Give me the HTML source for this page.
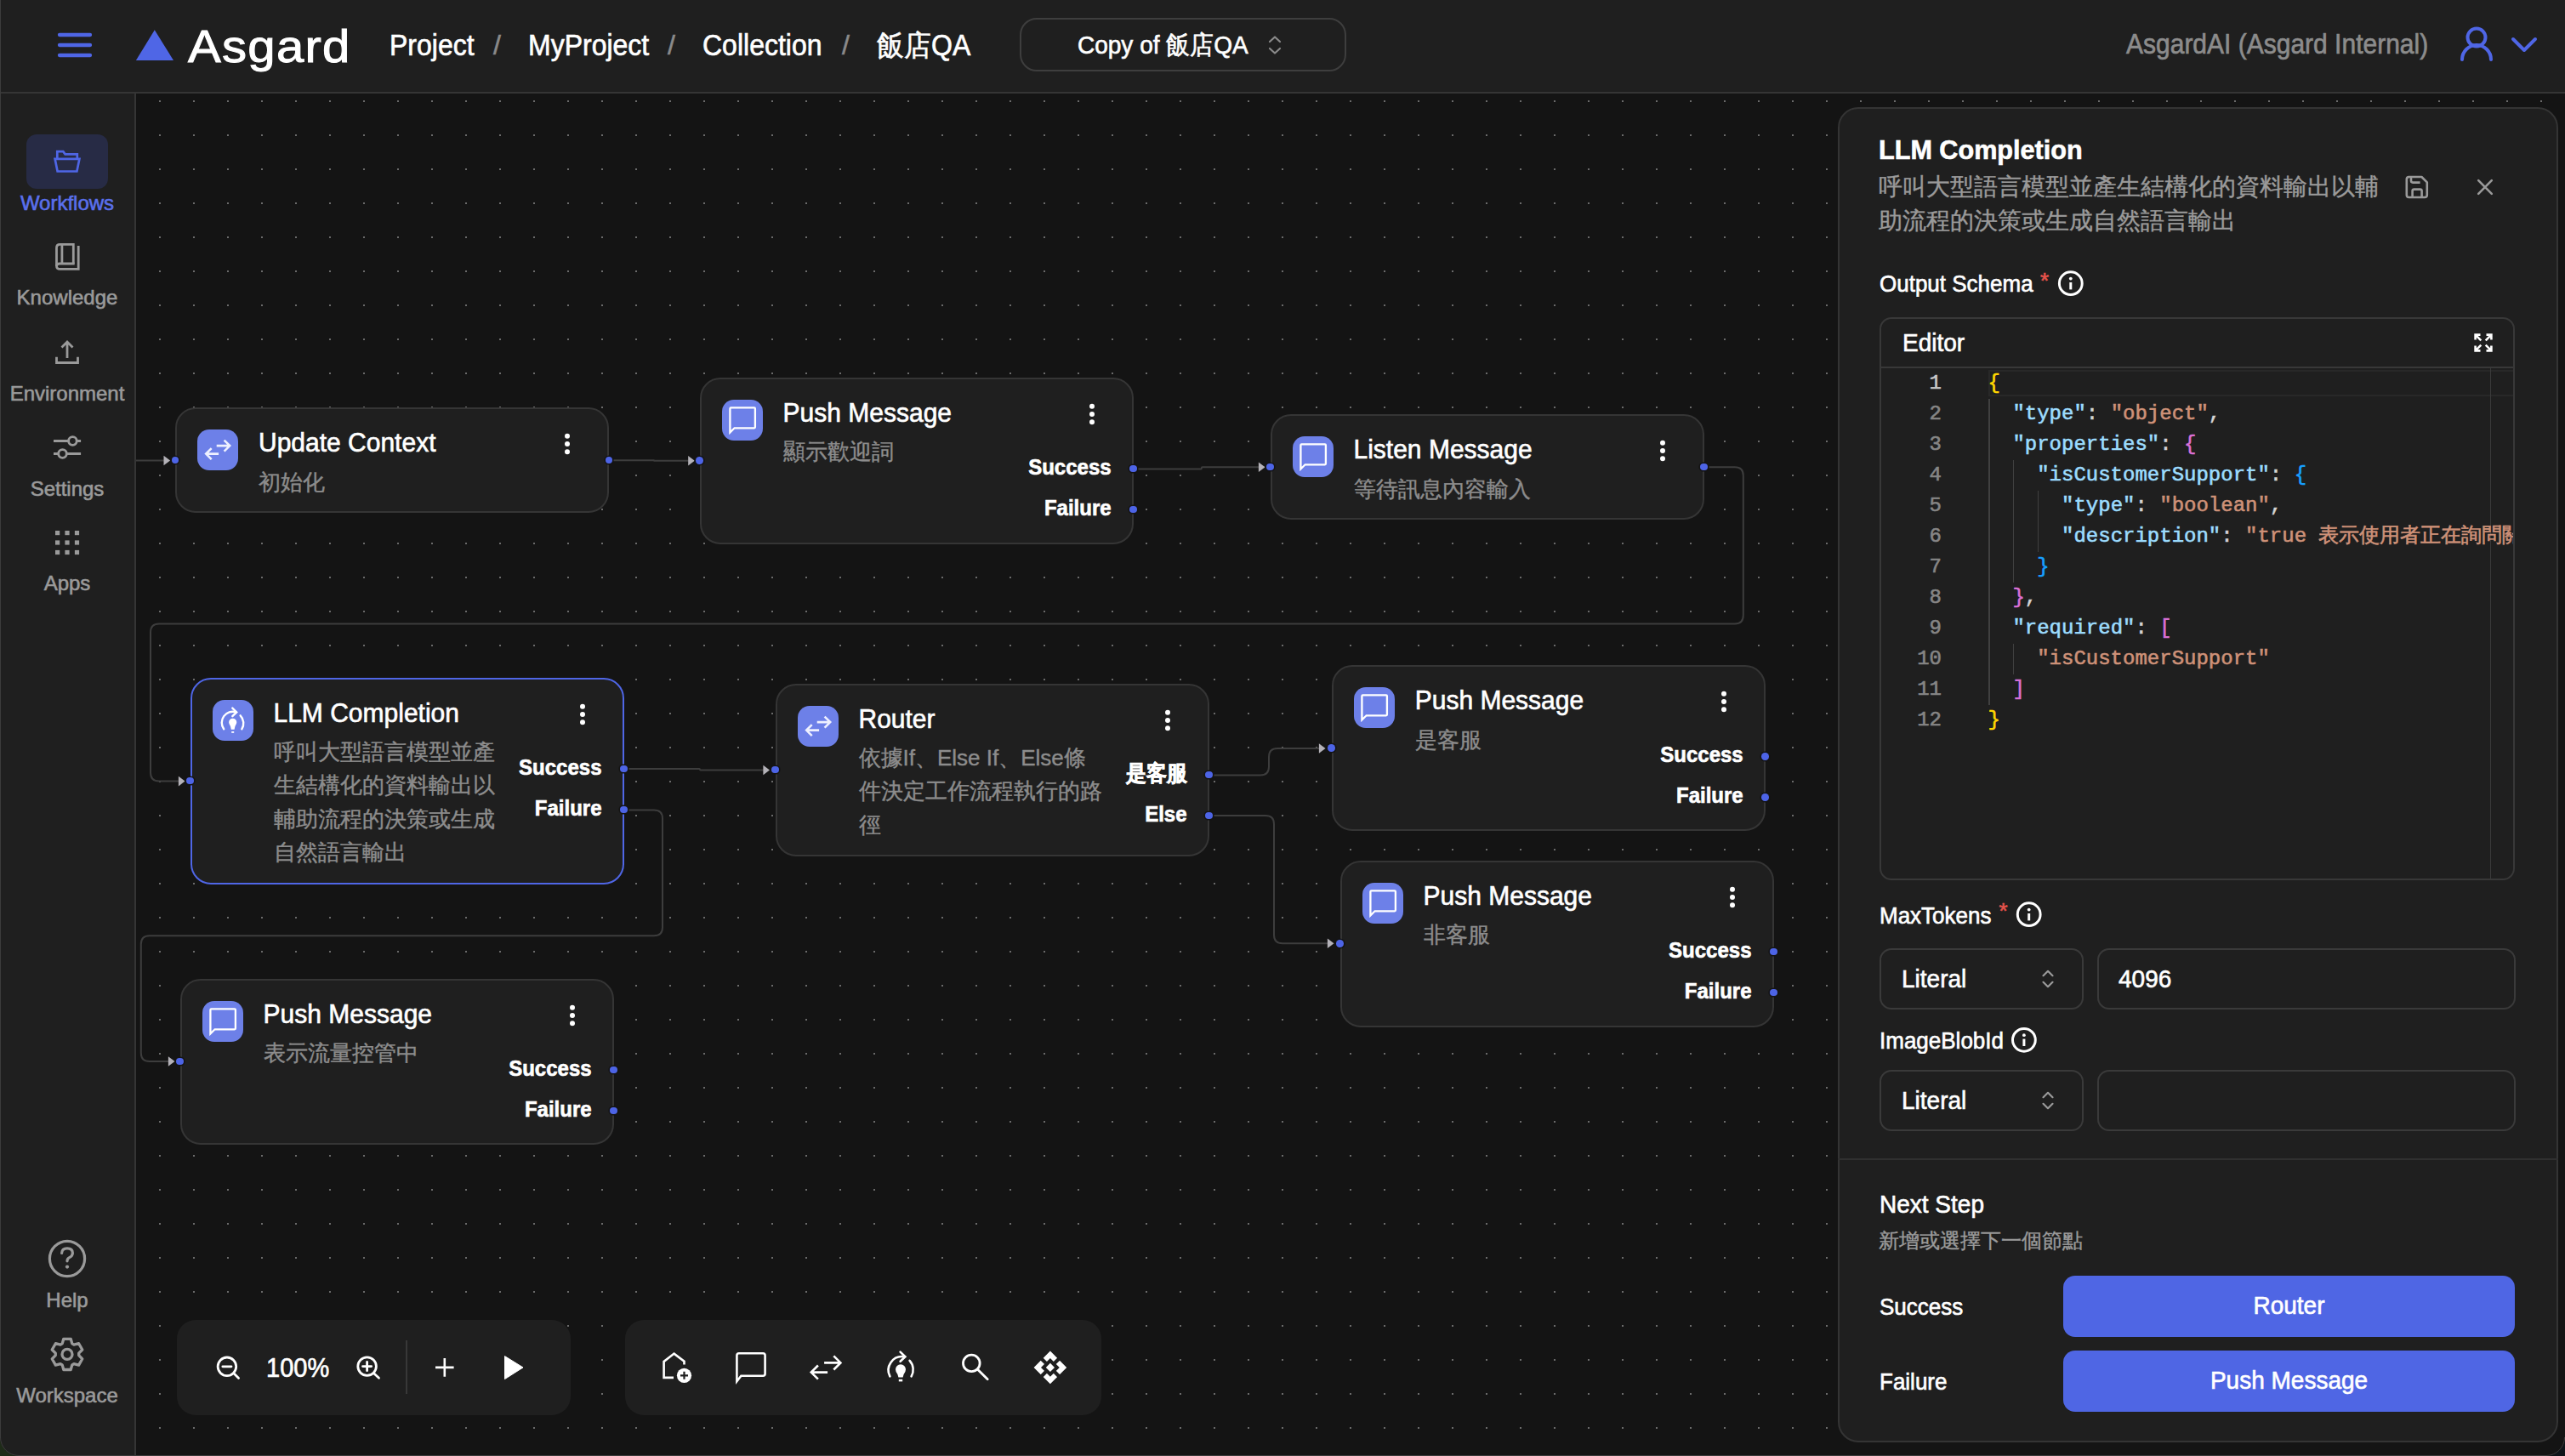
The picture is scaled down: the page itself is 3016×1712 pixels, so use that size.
<!DOCTYPE html>
<html><head><meta charset="utf-8">
<style>
*{box-sizing:border-box;margin:0;padding:0}
html,body{width:3016px;height:1712px;overflow:hidden;background:#141414}
body{font-family:"Liberation Sans",sans-serif;color:#fff;position:relative;-webkit-text-stroke-width:0.6px}
.a{position:absolute;white-space:nowrap}
#hdr{position:absolute;left:0;top:0;width:3016px;height:110px;background:#1f1f1f;border-bottom:2px solid #353535}
#side{position:absolute;left:0;top:110px;width:160px;height:1602px;background:#1f1f1f;border-right:2px solid #353535}
#canvas{position:absolute;left:160px;top:110px;width:2856px;height:1602px;background:#141414}
.node{position:absolute;background:#1f1f1f;border:2px solid #353535;border-radius:24px}
.node.sel{border-color:#4f66e6}
.ic{position:absolute;left:24px;top:24px;width:48px;height:48px;border-radius:14px;background:#6d80e8}
.ttl{position:absolute;left:96px;font-size:30px;line-height:30px;top:23px;color:#fff;white-space:nowrap;transform:scaleY(1.065);transform-origin:0 0}
.sub{position:absolute;left:96px;font-size:26px;line-height:39.4px;top:66.5px;-webkit-text-stroke-width:0.4px;color:#8c8c8c;white-space:nowrap}
.keb{position:absolute;top:28px;width:8px;height:26px}
.lab{position:absolute;right:24px;font-size:24px;line-height:24px;font-weight:700;color:#fff;white-space:nowrap;text-align:right;transform:scaleY(1.09) translateY(-0.6px);transform-origin:0 20px}
.hl{position:absolute;width:8.6px;height:8.6px;border-radius:50%;background:#4d64e6;box-shadow:0 0 0 1.6px #141414}
.tb{position:absolute;background:#1f1f1f;border-radius:22px}
</style></head>
<body>
<!-- HEADER -->
<div id="hdr">
  <svg class="a" style="left:64px;top:36px" width="48" height="34" viewBox="0 0 48 34">
    <g stroke="#4f66e6" stroke-width="4.3" stroke-linecap="round"><line x1="6" y1="5" x2="42" y2="5"/><line x1="6" y1="17" x2="42" y2="17"/><line x1="6" y1="29" x2="42" y2="29"/></g>
  </svg>
  <svg class="a" style="left:158px;top:34px" width="48" height="40" viewBox="0 0 48 40"><polygon points="23.8,1.2 46,37.1 1.9,37.1" fill="#4f66e6"/></svg>
  <div class="a" style="left:221px;top:27px;font-size:54px;line-height:54px;letter-spacing:1.2px;-webkit-text-stroke-width:1px;transform:scaleX(1.075);transform-origin:0 0">Asgard</div>
  <div class="a" id="bc" style="left:458px;top:36px;font-size:32px;line-height:32px;color:#fff;transform:scaleY(1.07);transform-origin:0 0">Project</div>
  <div class="a" style="left:580px;top:37px;font-size:32px;line-height:32px;color:#8a8a8a">/</div>
  <div class="a" style="left:621px;top:36px;font-size:32px;line-height:32px;transform:scaleY(1.07);transform-origin:0 0">MyProject</div>
  <div class="a" style="left:785px;top:37px;font-size:32px;line-height:32px;color:#8a8a8a">/</div>
  <div class="a" style="left:826px;top:36px;font-size:32px;line-height:32px;transform:scaleY(1.07);transform-origin:0 0">Collection</div>
  <div class="a" style="left:990px;top:37px;font-size:32px;line-height:32px;color:#8a8a8a">/</div>
  <div class="a" style="left:1031px;top:36px;font-size:32px;line-height:32px;transform:scaleY(1.07);transform-origin:0 0">飯店QA</div>
  <div class="a" style="left:1199px;top:21px;width:384px;height:63px;border:2px solid #3e3e3e;border-radius:20px"></div>
  <div class="a" style="left:1267px;top:38.5px;font-size:28px;line-height:28px;transform:scaleY(1.08);transform-origin:0 50%">Copy of 飯店QA</div>
  <svg class="a" style="left:1489px;top:40px" width="20" height="26" viewBox="0 0 20 26"><g fill="none" stroke="#8a8a8a" stroke-width="2.2" stroke-linecap="round" stroke-linejoin="round"><polyline points="4,9 10,3.5 16,9"/><polyline points="4,17 10,22.5 16,17"/></g></svg>
  <div class="a" style="left:2500px;top:37px;font-size:30px;line-height:30px;color:#8c8c8c;transform:scaleY(1.08);transform-origin:0 50%">AsgardAI (Asgard Internal)</div>
  <svg class="a" style="left:2890px;top:30px" width="44" height="46" viewBox="0 0 44 46"><g fill="none" stroke="#4f66e6" stroke-width="4" stroke-linecap="round"><circle cx="22" cy="14" r="10.5"/><path d="M5 40 A17 17 0 0 1 39 40"/></g></svg>
  <svg class="a" style="left:2950px;top:40px" width="36" height="26" viewBox="0 0 36 26"><polyline points="5,6 18,19 31,6" fill="none" stroke="#4f66e6" stroke-width="4" stroke-linecap="round" stroke-linejoin="round"/></svg>
</div>

<!-- SIDEBAR -->
<div id="side">
  <div class="a" style="left:31px;top:48px;width:96px;height:64px;border-radius:12px;background:#272b45"></div>
  <svg class="a" style="left:0;top:0" width="158" height="1602" viewBox="0 110 158 1602">
    <g fill="none" stroke="#4f66e6" stroke-width="2.7" stroke-linejoin="miter">
      <path d="M67.3 186.8 V178.1 H74.3 L76.6 181.3 H90.8 V186.8"/>
      <path d="M64.6 186.8 H93.4 L90.4 201.5 H67.6 Z"/>
    </g>
    <g fill="none" stroke="#9a9a9a" stroke-width="2.8">
      <path d="M86.3 310 V287.4 H70.5 Q66.5 287.4 66.5 291.4 V312.4 Q66.5 316.4 70.5 316.4 H92.2 V289"/>
      <path d="M66.5 313 Q66.5 310 70 310 H87.7"/>
      <path d="M72.9 287.4 V310"/>
      <path d="M79 421 V402.5 M72.5 408.6 L79 402.1 L85.5 408.6"/>
      <path d="M66.5 419.8 V426.5 H91.5 V419.8"/>
      <path d="M63 518.5 H80.6 M90.2 518.5 H95.1 M63 533.5 H68.7 M78.3 533.5 H95.1"/>
      <circle cx="85.4" cy="518.5" r="4.8"/>
      <circle cx="73.5" cy="533.5" r="4.8"/>
    </g>
    <g fill="#9a9a9a">
      <rect x="65" y="624" width="5.2" height="5.2"/><rect x="76.4" y="624" width="5.2" height="5.2"/><rect x="87.9" y="624" width="5.2" height="5.2"/>
      <rect x="65" y="635.4" width="5.2" height="5.2"/><rect x="76.4" y="635.4" width="5.2" height="5.2"/><rect x="87.9" y="635.4" width="5.2" height="5.2"/>
      <rect x="65" y="646.9" width="5.2" height="5.2"/><rect x="76.4" y="646.9" width="5.2" height="5.2"/><rect x="87.9" y="646.9" width="5.2" height="5.2"/>
    </g>
    <g fill="none" stroke="#9a9a9a" stroke-width="3.2" stroke-linecap="round">
      <circle cx="79" cy="1480" r="20.6"/>
      <path d="M72.6 1473.5 Q72.8 1467.8 79 1467.8 Q85.4 1467.8 85.4 1473.2 Q85.4 1476.8 81.6 1478.6 Q79 1479.8 79 1482.8"/>
    </g>
    <circle cx="79" cy="1489.6" r="2.1" fill="#9a9a9a"/>
    <g fill="none" stroke="#9a9a9a" stroke-width="3.3" stroke-linejoin="round">
      <path d="M73.2 1579.9 L74.8 1574.3 L83.2 1574.3 L84.8 1579.9 L86.9 1581.1 L92.6 1579.7 L96.8 1587.0 L92.7 1591.2 L92.7 1593.6 L96.8 1597.8 L92.6 1605.1 L86.9 1603.7 L84.8 1604.9 L83.2 1610.5 L74.8 1610.5 L73.2 1604.9 L71.1 1603.7 L65.4 1605.1 L61.2 1597.8 L65.3 1593.6 L65.3 1591.2 L61.2 1587.0 L65.4 1579.7 L71.1 1581.1 Z"/>
      <circle cx="79" cy="1592.4" r="6"/>
    </g>
  </svg>
  <div class="a" style="left:0;width:158px;text-align:center;top:117px;font-size:24px;line-height:24px;color:#5a70ec">Workflows</div>
  <div class="a" style="left:0;width:158px;text-align:center;top:228px;font-size:24px;line-height:24px;color:#9a9a9a">Knowledge</div>
  <div class="a" style="left:0;width:158px;text-align:center;top:340.5px;font-size:24px;line-height:24px;color:#9a9a9a">Environment</div>
  <div class="a" style="left:0;width:158px;text-align:center;top:452.5px;font-size:24px;line-height:24px;color:#9a9a9a">Settings</div>
  <div class="a" style="left:0;width:158px;text-align:center;top:563.5px;font-size:24px;line-height:24px;color:#9a9a9a">Apps</div>
  <div class="a" style="left:0;width:158px;text-align:center;top:1406.5px;font-size:24px;line-height:24px;color:#9a9a9a">Help</div>
  <div class="a" style="left:0;width:158px;text-align:center;top:1518.5px;font-size:24px;line-height:24px;color:#9a9a9a">Workspace</div>
</div>

<!-- CANVAS -->
<div id="canvas">
  <svg width="2856" height="1602" style="position:absolute;left:0;top:0">
    <defs><pattern id="dots" x="27" y="8" width="40" height="40" patternUnits="userSpaceOnUse"><rect x="0" y="0" width="2" height="2" fill="#6a6a6a"/></pattern></defs>
    <rect width="2856" height="1602" fill="url(#dots)"/>
  </svg>
</div>

<!--NODES-->
<svg class="a" style="left:0;top:0" width="3016" height="1712" viewBox="0 0 3016 1712"><g fill="none" stroke="#3d3d3d" stroke-width="2"><path d="M160 541.5 L193 541.5"/><path d="M716 541.3 L768.8 541.3 Q769 541.3 769.0 541.5 L769.0 541.5 Q769 541.8 769.2 541.8 L810 541.8"/><path d="M1332.6 551.6 L1411.6 551.6 Q1412.8 551.6 1412.8 550.4 L1412.8 550.4 Q1412.8 549.2 1414.0 549.2 L1487 549.2"/><path d="M2003.5 549.2 L2039.8 549.2 Q2049.8 549.2 2049.8 559.2 L2049.8 723.6 Q2049.8 733.6 2039.8 733.6 L187.0 733.6 Q177 733.6 177.0 743.6 L177.0 908.6 Q177 918.6 187.0 918.6 L211 918.6"/><path d="M733.5 904 L822.2 904.0 Q823 904 823.0 904.8 L823.0 904.8 Q823 905.5 823.8 905.5 L899 905.5"/><path d="M733.5 952.5 L769.0 952.5 Q779 952.5 779.0 962.5 L779.0 1090.3 Q779 1100.3 769.0 1100.3 L175.8 1100.3 Q165.8 1100.3 165.8 1110.3 L165.8 1238.0 Q165.8 1248 175.8 1248.0 L199 1248"/><path d="M1421.5 911.5 L1482.0 911.5 Q1492 911.5 1492.0 901.5 L1492.0 890.0 Q1492 880 1502.0 880.0 L1553 880"/><path d="M1421.5 959 L1488.0 959.0 Q1498 959 1498.0 969.0 L1498.0 1099.3 Q1498 1109.3 1508.0 1109.3 L1563 1109.3"/></g><g fill="#b4b2b8" stroke="none"><polygon points="192.5,535.7 200.1,541.5 192.5,547.3"/><polygon points="809.2,536.0 816.8,541.8 809.2,547.6"/><polygon points="1479.9,543.4 1487.5,549.2 1479.9,555.0"/><polygon points="209.9,912.8 217.5,918.6 209.9,924.4"/><polygon points="897.4,899.7 905.0,905.5 897.4,911.3"/><polygon points="197.9,1242.2 205.5,1248.0 197.9,1253.8"/><polygon points="1550.9,874.2 1558.5,880.0 1550.9,885.8"/><polygon points="1560.9,1103.5 1568.5,1109.3 1560.9,1115.1"/></g></svg>
<div class="node" style="left:206px;top:479px;width:510px;height:124px"><div class="ic"><svg width="48" height="48" viewBox="0 0 48 48"><g fill="none" stroke="#eef0ff" stroke-width="2.6" stroke-linecap="butt" stroke-linejoin="miter"><path d="M22.7 19.1 H38.2 M31.6 12.6 L38.2 19.1 L31.6 25.6"/><path d="M25.1 28.6 H10.2 M16.7 22.1 L10.2 28.6 L16.7 35.1"/></g></svg></div><div class="ttl">Update Context</div><div class="sub">初始化</div><svg class="keb" style="left:455px" width="8" height="26" viewBox="0 0 8 26"><circle cx="4" cy="3.8" r="3" fill="#fff"/><circle cx="4" cy="13" r="3" fill="#fff"/><circle cx="4" cy="22.2" r="3" fill="#fff"/></svg></div>
<div class="node" style="left:822.6px;top:443.5px;width:510px;height:196px"><div class="ic"><svg width="48" height="48" viewBox="0 0 48 48"><path d="M9.4 38.5 V10.4 Q9.4 9.4 10.4 9.4 H37.9 Q38.9 9.4 38.9 10.4 V32.3 Q38.9 33.3 37.9 33.3 H14.6 Z" fill="none" stroke="#fff" stroke-width="2.3" stroke-linejoin="miter"/></svg></div><div class="ttl">Push Message</div><div class="sub">顯示歡迎詞</div><svg class="keb" style="left:455px" width="8" height="26" viewBox="0 0 8 26"><circle cx="4" cy="3.8" r="3" fill="#fff"/><circle cx="4" cy="13" r="3" fill="#fff"/><circle cx="4" cy="22.2" r="3" fill="#fff"/></svg><div class="lab" style="top:93px">Success</div><div class="lab" style="top:141px">Failure</div></div>
<div class="node" style="left:1493.5px;top:487px;width:510px;height:124px"><div class="ic"><svg width="48" height="48" viewBox="0 0 48 48"><path d="M9.4 38.5 V10.4 Q9.4 9.4 10.4 9.4 H37.9 Q38.9 9.4 38.9 10.4 V32.3 Q38.9 33.3 37.9 33.3 H14.6 Z" fill="none" stroke="#fff" stroke-width="2.3" stroke-linejoin="miter"/></svg></div><div class="ttl">Listen Message</div><div class="sub">等待訊息內容輸入</div><svg class="keb" style="left:455px" width="8" height="26" viewBox="0 0 8 26"><circle cx="4" cy="3.8" r="3" fill="#fff"/><circle cx="4" cy="13" r="3" fill="#fff"/><circle cx="4" cy="22.2" r="3" fill="#fff"/></svg></div>
<div class="node sel" style="left:223.5px;top:796.5px;width:510px;height:243px"><div class="ic"><svg width="48" height="48" viewBox="0 0 48 48"><g fill="none" stroke="#fff" stroke-width="2.4" stroke-linecap="round"><path d="M13.2 34.3 A13 13 0 0 1 27.6 14.3"/><path d="M23.3 9.6 L28.2 14.4 L23.3 19.2"/><path d="M32.6 18.3 A13 13 0 0 1 34.3 34.3"/></g><path d="M23.7 21.7 A4.6 4.6 0 0 1 28.3 26.3 Q28.3 28.4 26.4 31 L25.6 34.8 H21.8 L21 31 Q19.1 28.4 19.1 26.3 A4.6 4.6 0 0 1 23.7 21.7 Z" fill="#fff"/><rect x="22.2" y="37" width="3" height="1.8" fill="#fff"/></svg></div><div class="ttl">LLM Completion</div><div class="sub">呼叫大型語言模型並產<br>生結構化的資料輸出以<br>輔助流程的決策或生成<br>自然語言輸出</div><svg class="keb" style="left:455px" width="8" height="26" viewBox="0 0 8 26"><circle cx="4" cy="3.8" r="3" fill="#fff"/><circle cx="4" cy="13" r="3" fill="#fff"/><circle cx="4" cy="22.2" r="3" fill="#fff"/></svg><div class="lab" style="top:93px">Success</div><div class="lab" style="top:141px">Failure</div></div>
<div class="node" style="left:911.5px;top:803.5px;width:510px;height:203px"><div class="ic"><svg width="48" height="48" viewBox="0 0 48 48"><g fill="none" stroke="#eef0ff" stroke-width="2.6" stroke-linecap="butt" stroke-linejoin="miter"><path d="M22.7 19.1 H38.2 M31.6 12.6 L38.2 19.1 L31.6 25.6"/><path d="M25.1 28.6 H10.2 M16.7 22.1 L10.2 28.6 L16.7 35.1"/></g></svg></div><div class="ttl">Router</div><div class="sub">依據If、Else If、Else條<br>件決定工作流程執行的路<br>徑</div><svg class="keb" style="left:455px" width="8" height="26" viewBox="0 0 8 26"><circle cx="4" cy="3.8" r="3" fill="#fff"/><circle cx="4" cy="13" r="3" fill="#fff"/><circle cx="4" cy="22.2" r="3" fill="#fff"/></svg><div class="lab" style="top:93px">是客服</div><div class="lab" style="top:141px">Else</div></div>
<div class="node" style="left:1565.7px;top:782px;width:510px;height:195px"><div class="ic"><svg width="48" height="48" viewBox="0 0 48 48"><path d="M9.4 38.5 V10.4 Q9.4 9.4 10.4 9.4 H37.9 Q38.9 9.4 38.9 10.4 V32.3 Q38.9 33.3 37.9 33.3 H14.6 Z" fill="none" stroke="#fff" stroke-width="2.3" stroke-linejoin="miter"/></svg></div><div class="ttl">Push Message</div><div class="sub">是客服</div><svg class="keb" style="left:455px" width="8" height="26" viewBox="0 0 8 26"><circle cx="4" cy="3.8" r="3" fill="#fff"/><circle cx="4" cy="13" r="3" fill="#fff"/><circle cx="4" cy="22.2" r="3" fill="#fff"/></svg><div class="lab" style="top:93px">Success</div><div class="lab" style="top:141px">Failure</div></div>
<div class="node" style="left:1575.5px;top:1011.5px;width:510px;height:196px"><div class="ic"><svg width="48" height="48" viewBox="0 0 48 48"><path d="M9.4 38.5 V10.4 Q9.4 9.4 10.4 9.4 H37.9 Q38.9 9.4 38.9 10.4 V32.3 Q38.9 33.3 37.9 33.3 H14.6 Z" fill="none" stroke="#fff" stroke-width="2.3" stroke-linejoin="miter"/></svg></div><div class="ttl">Push Message</div><div class="sub">非客服</div><svg class="keb" style="left:455px" width="8" height="26" viewBox="0 0 8 26"><circle cx="4" cy="3.8" r="3" fill="#fff"/><circle cx="4" cy="13" r="3" fill="#fff"/><circle cx="4" cy="22.2" r="3" fill="#fff"/></svg><div class="lab" style="top:93px">Success</div><div class="lab" style="top:141px">Failure</div></div>
<div class="node" style="left:211.6px;top:1150.7px;width:510px;height:195px"><div class="ic"><svg width="48" height="48" viewBox="0 0 48 48"><path d="M9.4 38.5 V10.4 Q9.4 9.4 10.4 9.4 H37.9 Q38.9 9.4 38.9 10.4 V32.3 Q38.9 33.3 37.9 33.3 H14.6 Z" fill="none" stroke="#fff" stroke-width="2.3" stroke-linejoin="miter"/></svg></div><div class="ttl">Push Message</div><div class="sub">表示流量控管中</div><svg class="keb" style="left:455px" width="8" height="26" viewBox="0 0 8 26"><circle cx="4" cy="3.8" r="3" fill="#fff"/><circle cx="4" cy="13" r="3" fill="#fff"/><circle cx="4" cy="22.2" r="3" fill="#fff"/></svg><div class="lab" style="top:93px">Success</div><div class="lab" style="top:141px">Failure</div></div>
<div class="hl" style="left:201.7px;top:536.7px"></div>
<div class="hl" style="left:711.7px;top:536.7px"></div>
<div class="hl" style="left:818.3px;top:537.2px"></div>
<div class="hl" style="left:1328.3px;top:546.7px"></div>
<div class="hl" style="left:1328.3px;top:594.7px"></div>
<div class="hl" style="left:1489.2px;top:544.7px"></div>
<div class="hl" style="left:1999.2px;top:544.7px"></div>
<div class="hl" style="left:219.2px;top:913.7px"></div>
<div class="hl" style="left:729.2px;top:899.7px"></div>
<div class="hl" style="left:729.2px;top:947.7px"></div>
<div class="hl" style="left:907.2px;top:900.7px"></div>
<div class="hl" style="left:1417.2px;top:906.7px"></div>
<div class="hl" style="left:1417.2px;top:954.7px"></div>
<div class="hl" style="left:1561.4px;top:875.2px"></div>
<div class="hl" style="left:2071.4px;top:885.2px"></div>
<div class="hl" style="left:2071.4px;top:933.2px"></div>
<div class="hl" style="left:1571.2px;top:1105.2px"></div>
<div class="hl" style="left:2081.2px;top:1114.7px"></div>
<div class="hl" style="left:2081.2px;top:1162.7px"></div>
<div class="hl" style="left:207.3px;top:1243.9px"></div>
<div class="hl" style="left:717.3px;top:1253.9px"></div>
<div class="hl" style="left:717.3px;top:1301.9px"></div>
<!--/NODES-->
<!--PANEL-->
<div class="tb" style="left:208px;top:1552px;width:463px;height:112px"></div>
<div class="tb" style="left:735px;top:1552px;width:560px;height:112px"></div>
<svg class="a" style="left:0;top:0" width="3016" height="1712" viewBox="0 0 3016 1712">
 <g fill="none" stroke="#fff" stroke-width="2.8" stroke-linecap="round">
  <circle cx="266.9" cy="1606.8" r="10.8"/><path d="M261.8 1606.8 H272 M274.6 1614.6 L280.6 1620.4"/>
  <circle cx="431.6" cy="1606.6" r="10.8"/><path d="M426.5 1606.6 H436.7 M431.6 1601.5 V1611.7 M439.3 1614.4 L445.5 1620.2"/>
 </g>
 <rect x="477" y="1576" width="2" height="63" fill="#383838"/>
 <g fill="none" stroke="#fff" stroke-width="2.6"><path d="M512 1607.9 H533.6 M522.8 1597 V1618.7"/></g>
 <polygon points="593.5,1594.6 615,1607.9 593.5,1621.6" fill="#fff" stroke="#fff" stroke-width="1" stroke-linejoin="round"/>
 <g fill="none" stroke="#fff" stroke-width="2.6" stroke-linejoin="miter">
  <path d="M792 1619.9 H780.6 V1601 L792.6 1591.6 L804.5 1600.6 V1604.5"/>
  <path d="M866.4 1624.2 V1593.7 Q866.4 1591.2 868.9 1591.2 H897.1 Q899.6 1591.2 899.6 1593.7 V1615.2 Q899.6 1617.7 897.1 1617.7 H871.4 Z"/>
  <path d="M969.1 1602.4 H988 M980.3 1594.3 L988.4 1602.4 L980.3 1610.5"/>
  <path d="M973.1 1613.6 H954.2 M961.9 1605.5 L953.8 1613.6 L961.9 1621.7"/>
 </g>
 <circle cx="804.5" cy="1617.3" r="8.6" fill="#fff"/>
 <path d="M804.5 1612.8 V1621.8 M800 1617.3 H809" stroke="#1f1f1f" stroke-width="2.2"/>
 <g fill="none" stroke="#fff" stroke-width="2.6" stroke-linecap="round">
  <path d="M1046.4 1618.4 A16 16 0 0 1 1062.5 1595.2"/>
  <path d="M1058.6 1589.6 L1064.4 1595.2 L1058.6 1600.8"/>
  <path d="M1069.6 1599.8 A16 16 0 0 1 1071.6 1618.4"/>
 </g>
 <path d="M1059 1604.3 A6 6 0 0 1 1065 1610.3 Q1065 1613 1062.6 1616 L1061.6 1619.6 H1056.4 L1055.4 1616 Q1053 1613 1053 1610.3 A6 6 0 0 1 1059 1604.3 Z" fill="#fff"/>
 <rect x="1056.8" y="1621.8" width="4.4" height="2.6" fill="#fff"/>
 <g fill="none" stroke="#fff" stroke-width="2.8" stroke-linecap="round"><circle cx="1142.3" cy="1602.9" r="9.8"/><path d="M1149.8 1610.4 L1161.2 1621.8"/></g>
 <path fill="#fff" fill-rule="evenodd" d="M1234.9 1588.6 L1254.2 1607.9 L1234.9 1627.2 L1215.6 1607.9 Z M1234.9 1597 L1245.8 1607.9 L1234.9 1618.8 L1224 1607.9 Z M1234.9 1602.8 L1240 1607.9 L1234.9 1613 L1229.8 1607.9 Z"/>
 <path d="M1240 1602.8 L1246.4 1596.4 M1240 1613 L1246.4 1619.4 M1229.8 1602.8 L1223.4 1596.4 M1229.8 1613 L1223.4 1619.4" stroke="#1f1f1f" stroke-width="4.2"/>
</svg>
<div class="a" style="left:313px;top:1594px;font-size:29px;line-height:29px;color:#fff;transform:scaleY(1.08);transform-origin:0 50%">100%</div>
<div class="a" style="left:2161px;top:126px;width:847px;height:1570px;background:#1f1f1f;border:2px solid #343434;border-radius:24px"></div>
<div class="a" style="left:2161px;top:1362px;width:847px;height:2px;background:#303030"></div>
<div class="a" style="left:2209px;top:160.9px;font-size:30.6px;line-height:30.6px;color:#fff;font-weight:700;">LLM Completion</div>
<div class="a" style="left:2209px;top:200px;font-size:28px;line-height:39.5px;color:#9a9a9a;-webkit-text-stroke-width:0.4px">呼叫大型語言模型並產生結構化的資料輸出以輔<br>助流程的決策或生成自然語言輸出</div>
<svg class="a" style="left:0;top:0" width="3016" height="1712" viewBox="0 0 3016 1712">
 <g fill="none" stroke="#9a9a9a" stroke-width="2.6" stroke-linejoin="round">
  <path d="M2832 208 H2847.4 L2853.8 214.4 V229.2 Q2853.8 232 2851 232 H2832.6 Q2829.8 232 2829.8 229.2 V210.8 Q2829.8 208 2832.6 208 Z"/>
  <path d="M2835 208 V212.6 Q2835 214.6 2837 214.6 H2845.6"/>
  <path d="M2836.6 232 V224.6 Q2836.6 222.6 2838.6 222.6 H2845.6 Q2847.6 222.6 2847.6 224.6 V232"/>
 </g>
 <path d="M2914.2 212.2 L2929.8 227.8 M2929.8 212.2 L2914.2 227.8" stroke="#9a9a9a" stroke-width="2.6" stroke-linecap="round"/>
</svg>
<div class="a" style="left:2210px;top:320.2px;font-size:26px;line-height:26px;color:#fff;font-weight:400;transform:scaleY(1.065);transform-origin:0 50%;">Output Schema</div>
<div class="a" style="left:2399px;top:317.0px;font-size:26px;line-height:26px;color:#e5534b;font-weight:400;">*</div>
<div class="a" style="left:2350.5px;top:1058.0px;font-size:26px;line-height:26px;color:#e5534b;font-weight:400;">*</div>
<div class="a" style="left:2210px;top:1062.6px;font-size:26px;line-height:26px;color:#fff;font-weight:400;transform:scaleY(1.065);transform-origin:0 50%;">MaxTokens</div>
<div class="a" style="left:2210px;top:1210.2px;font-size:26px;line-height:26px;color:#fff;font-weight:400;transform:scaleY(1.065);transform-origin:0 50%;">ImageBlobId</div>
<svg class="a" style="left:0;top:0" width="3016" height="1712" viewBox="0 0 3016 1712"><circle cx="2434.8" cy="333.2" r="13.4" fill="none" stroke="#fff" stroke-width="3"/><circle cx="2434.8" cy="327.59999999999997" r="1.9" fill="#fff"/><rect x="2433.3" y="332.0" width="3" height="8.4" fill="#fff"/><circle cx="2385.7" cy="1075.2" r="13.4" fill="none" stroke="#fff" stroke-width="3"/><circle cx="2385.7" cy="1069.6000000000001" r="1.9" fill="#fff"/><rect x="2384.2" y="1074.0" width="3" height="8.4" fill="#fff"/><circle cx="2379.9" cy="1222.8" r="13.4" fill="none" stroke="#fff" stroke-width="3"/><circle cx="2379.9" cy="1217.2" r="1.9" fill="#fff"/><rect x="2378.4" y="1221.6" width="3" height="8.4" fill="#fff"/></svg>
<div class="a" style="left:2210px;top:373px;width:747px;height:662px;border:2px solid #383838;border-radius:14px;overflow:hidden"><div style="position:absolute;left:0;top:56px;width:100%;height:2px;background:#383838"></div></div>
<div class="a" style="left:2237px;top:388.6px;font-size:28px;line-height:28px;color:#fff;font-weight:400;transform:scaleY(1.065);transform-origin:0 50%;">Editor</div>
<svg class="a" style="left:2905px;top:388px" width="30" height="30" viewBox="0 0 30 30"><g fill="none" stroke="#fff" stroke-width="2.6"><path d="M5.6 11.5 V5.6 H11.5 M5.6 5.6 L12.3 12.3"/><path d="M18.5 5.6 H24.4 V11.5 M24.4 5.6 L17.7 12.3"/><path d="M5.6 18.5 V24.4 H11.5 M5.6 24.4 L12.3 17.7"/><path d="M24.4 18.5 V24.4 H18.5 M24.4 24.4 L17.7 17.7"/></g></svg>
<div class="a" style="left:2212px;top:432px;width:743px;height:601px;overflow:hidden"><div style="position:absolute;left:126px;top:3px;width:617px;height:31px;border:2px solid #282828;border-right:none"></div><div style="position:absolute;left:716px;top:0;width:1px;height:601px;background:#3a3a3a"></div><div style="position:absolute;left:126.1px;top:36.7px;width:1.5px;height:360px;background:#404040"></div><div style="position:absolute;left:154.9px;top:108.7px;width:1.5px;height:144px;background:#404040"></div><div style="position:absolute;left:154.9px;top:324.7px;width:1.5px;height:36px;background:#404040"></div><div style="position:absolute;left:183.7px;top:144.7px;width:1.5px;height:72px;background:#404040"></div><div style="position:absolute;right:672px;top:0.7px;font-family:'Liberation Mono',monospace;font-size:24px;line-height:36px;color:#c6c6c6">1</div><div style="position:absolute;left:125.6px;top:0.7px;font-family:'Liberation Mono',monospace;font-size:24px;line-height:36px;white-space:pre;color:#d4d4d4"><span style="color:#ffd700">{</span></div><div style="position:absolute;right:672px;top:36.7px;font-family:'Liberation Mono',monospace;font-size:24px;line-height:36px;color:#858585">2</div><div style="position:absolute;left:125.6px;top:36.7px;font-family:'Liberation Mono',monospace;font-size:24px;line-height:36px;white-space:pre;color:#d4d4d4">  <span style="color:#9cdcfe">"type"</span><span style="color:#d4d4d4">: </span><span style="color:#ce9178">"object"</span><span style="color:#d4d4d4">,</span></div><div style="position:absolute;right:672px;top:72.7px;font-family:'Liberation Mono',monospace;font-size:24px;line-height:36px;color:#858585">3</div><div style="position:absolute;left:125.6px;top:72.7px;font-family:'Liberation Mono',monospace;font-size:24px;line-height:36px;white-space:pre;color:#d4d4d4">  <span style="color:#9cdcfe">"properties"</span><span style="color:#d4d4d4">: </span><span style="color:#da70d6">{</span></div><div style="position:absolute;right:672px;top:108.7px;font-family:'Liberation Mono',monospace;font-size:24px;line-height:36px;color:#858585">4</div><div style="position:absolute;left:125.6px;top:108.7px;font-family:'Liberation Mono',monospace;font-size:24px;line-height:36px;white-space:pre;color:#d4d4d4">    <span style="color:#9cdcfe">"isCustomerSupport"</span><span style="color:#d4d4d4">: </span><span style="color:#179fff">{</span></div><div style="position:absolute;right:672px;top:144.7px;font-family:'Liberation Mono',monospace;font-size:24px;line-height:36px;color:#858585">5</div><div style="position:absolute;left:125.6px;top:144.7px;font-family:'Liberation Mono',monospace;font-size:24px;line-height:36px;white-space:pre;color:#d4d4d4">      <span style="color:#9cdcfe">"type"</span><span style="color:#d4d4d4">: </span><span style="color:#ce9178">"boolean"</span><span style="color:#d4d4d4">,</span></div><div style="position:absolute;right:672px;top:180.7px;font-family:'Liberation Mono',monospace;font-size:24px;line-height:36px;color:#858585">6</div><div style="position:absolute;left:125.6px;top:180.7px;font-family:'Liberation Mono',monospace;font-size:24px;line-height:36px;white-space:pre;color:#d4d4d4">      <span style="color:#9cdcfe">"description"</span><span style="color:#d4d4d4">: </span><span style="color:#ce9178">"true 表示使用者正在詢問關於客服的問題"</span></div><div style="position:absolute;right:672px;top:216.7px;font-family:'Liberation Mono',monospace;font-size:24px;line-height:36px;color:#858585">7</div><div style="position:absolute;left:125.6px;top:216.7px;font-family:'Liberation Mono',monospace;font-size:24px;line-height:36px;white-space:pre;color:#d4d4d4">    <span style="color:#179fff">}</span></div><div style="position:absolute;right:672px;top:252.7px;font-family:'Liberation Mono',monospace;font-size:24px;line-height:36px;color:#858585">8</div><div style="position:absolute;left:125.6px;top:252.7px;font-family:'Liberation Mono',monospace;font-size:24px;line-height:36px;white-space:pre;color:#d4d4d4">  <span style="color:#da70d6">}</span><span style="color:#d4d4d4">,</span></div><div style="position:absolute;right:672px;top:288.7px;font-family:'Liberation Mono',monospace;font-size:24px;line-height:36px;color:#858585">9</div><div style="position:absolute;left:125.6px;top:288.7px;font-family:'Liberation Mono',monospace;font-size:24px;line-height:36px;white-space:pre;color:#d4d4d4">  <span style="color:#9cdcfe">"required"</span><span style="color:#d4d4d4">: </span><span style="color:#da70d6">[</span></div><div style="position:absolute;right:672px;top:324.7px;font-family:'Liberation Mono',monospace;font-size:24px;line-height:36px;color:#858585">10</div><div style="position:absolute;left:125.6px;top:324.7px;font-family:'Liberation Mono',monospace;font-size:24px;line-height:36px;white-space:pre;color:#d4d4d4">    <span style="color:#ce9178">"isCustomerSupport"</span></div><div style="position:absolute;right:672px;top:360.7px;font-family:'Liberation Mono',monospace;font-size:24px;line-height:36px;color:#858585">11</div><div style="position:absolute;left:125.6px;top:360.7px;font-family:'Liberation Mono',monospace;font-size:24px;line-height:36px;white-space:pre;color:#d4d4d4">  <span style="color:#da70d6">]</span></div><div style="position:absolute;right:672px;top:396.7px;font-family:'Liberation Mono',monospace;font-size:24px;line-height:36px;color:#858585">12</div><div style="position:absolute;left:125.6px;top:396.7px;font-family:'Liberation Mono',monospace;font-size:24px;line-height:36px;white-space:pre;color:#d4d4d4"><span style="color:#ffd700">}</span></div></div>
<div class="a" style="left:2210px;top:1115px;width:240px;height:72px;border:2px solid #3a3a3a;border-radius:14px"></div>
<div class="a" style="left:2466px;top:1115px;width:492px;height:72px;border:2px solid #3a3a3a;border-radius:14px"></div>
<div class="a" style="left:2236px;top:1136.8px;font-size:28px;line-height:28px;color:#fff;font-weight:400;transform:scaleY(1.065);transform-origin:0 50%;">Literal</div>
<svg class="a" style="left:2398px;top:1138px" width="20" height="26" viewBox="0 0 20 26"><g fill="none" stroke="#9a9a9a" stroke-width="2.2" stroke-linecap="round" stroke-linejoin="round"><polyline points="4.5,9.2 10,3.8 15.5,9.2"/><polyline points="4.5,16.8 10,22.2 15.5,16.8"/></g></svg>
<div class="a" style="left:2210px;top:1258px;width:240px;height:72px;border:2px solid #3a3a3a;border-radius:14px"></div>
<div class="a" style="left:2466px;top:1258px;width:492px;height:72px;border:2px solid #3a3a3a;border-radius:14px"></div>
<div class="a" style="left:2236px;top:1279.8px;font-size:28px;line-height:28px;color:#fff;font-weight:400;transform:scaleY(1.065);transform-origin:0 50%;">Literal</div>
<svg class="a" style="left:2398px;top:1281px" width="20" height="26" viewBox="0 0 20 26"><g fill="none" stroke="#9a9a9a" stroke-width="2.2" stroke-linecap="round" stroke-linejoin="round"><polyline points="4.5,9.2 10,3.8 15.5,9.2"/><polyline points="4.5,16.8 10,22.2 15.5,16.8"/></g></svg>
<div class="a" style="left:2491px;top:1136.8px;font-size:28px;line-height:28px;color:#fff;font-weight:400;transform:scaleY(1.065);transform-origin:0 50%;">4096</div>
<div class="a" style="left:2210px;top:1401.7px;font-size:28px;line-height:28px;color:#fff;font-weight:400;transform:scaleY(1.065);transform-origin:0 50%;">Next Step</div>
<div class="a" style="left:2209px;top:1443px;font-size:24px;line-height:32px;color:#9a9a9a;-webkit-text-stroke-width:0.4px">新增或選擇下一個節點</div>
<div class="a" style="left:2210px;top:1523.0px;font-size:26px;line-height:26px;color:#fff;font-weight:400;transform:scaleY(1.065);transform-origin:0 50%;">Success</div>
<div class="a" style="left:2210px;top:1611.0px;font-size:26px;line-height:26px;color:#fff;font-weight:400;transform:scaleY(1.065);transform-origin:0 50%;">Failure</div>
<div class="a" style="left:2426px;top:1500px;width:531px;height:72px;border-radius:14px;background:#4f66e4"></div>
<div class="a" style="left:2426px;top:1588px;width:531px;height:72px;border-radius:14px;background:#4f66e4"></div>
<div class="a" style="left:2426px;width:531px;text-align:center;top:1521.3px;font-size:28px;line-height:28px;transform:scaleY(1.08);transform-origin:0 50%">Router</div>
<div class="a" style="left:2426px;width:531px;text-align:center;top:1609.3px;font-size:28px;line-height:28px;transform:scaleY(1.08);transform-origin:0 50%">Push Message</div>
<!--/PANEL-->
<!--WIN-->
<svg class="a" style="left:0;top:0;pointer-events:none" width="3016" height="1712" viewBox="0 0 3016 1712">
 <path d="M0 1690 V1712 H22 A22 22 0 0 1 0 1690 Z" fill="#1e2b18"/>
 <path d="M3016 1690 V1712 H2994 A22 22 0 0 0 3016 1690 Z" fill="#0e1419"/>
 <path d="M0.5 0 V1690 A21.5 21.5 0 0 0 22 1711.5 H2994 A21.5 21.5 0 0 0 3015.5 1690" fill="none" stroke="#3c3c3c" stroke-width="1"/>
</svg>
<!--/WIN-->
</body></html>
